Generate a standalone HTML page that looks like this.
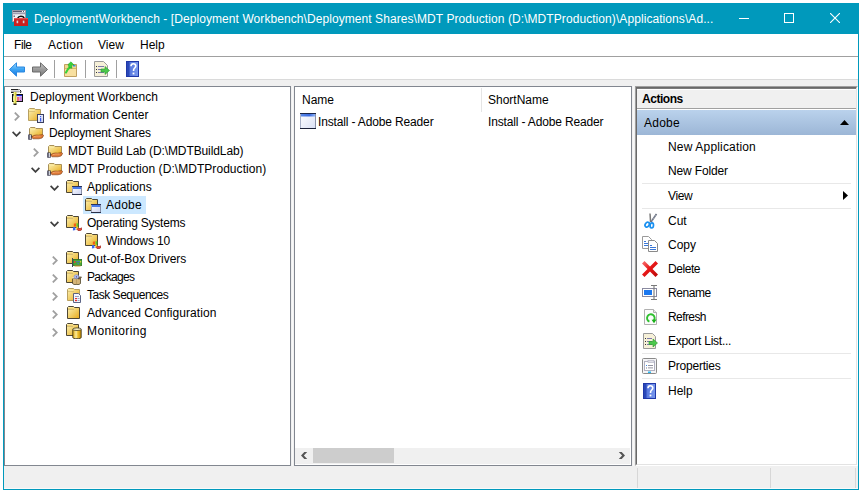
<!DOCTYPE html>
<html><head><meta charset="utf-8">
<style>
*{box-sizing:border-box}
html,body{margin:0;padding:0;background:#fff;width:864px;height:495px;overflow:hidden;position:relative;font-family:"Liberation Sans",sans-serif;font-size:12px;color:#000}
.a{position:absolute}
.t{position:absolute;white-space:nowrap;line-height:18px;height:18px}
svg.i{position:absolute;overflow:visible;width:16px;height:16px}
</style></head><body>
<svg width="0" height="0" style="position:absolute">
<defs>
<linearGradient id="gFold" x1="0" y1="0" x2="0" y2="1"><stop offset="0" stop-color="#fbeaa5"/><stop offset="1" stop-color="#e6c25c"/></linearGradient>
<linearGradient id="gFoldB" x1="0" y1="0" x2="1" y2="1"><stop offset="0" stop-color="#f4dc8c"/><stop offset="1" stop-color="#dcb452"/></linearGradient>
<linearGradient id="gWin" x1="0" y1="0" x2="1" y2="1"><stop offset="0" stop-color="#fff"/><stop offset="1" stop-color="#d8dcf0"/></linearGradient>
<linearGradient id="gBlue" x1="0" y1="0" x2="0" y2="1"><stop offset="0" stop-color="#6aa8ff"/><stop offset="1" stop-color="#1a62d8"/></linearGradient>
<linearGradient id="gF" x1="0" y1="0" x2="1" y2="1"><stop offset="0" stop-color="#fcf2b8"/><stop offset=".5" stop-color="#f2d06a"/><stop offset="1" stop-color="#e8a818"/></linearGradient>
<linearGradient id="gDoc" x1="0" y1="0" x2="1" y2="1"><stop offset="0" stop-color="#ffffff"/><stop offset="1" stop-color="#c8d0f0"/></linearGradient>
<linearGradient id="gCyl" x1="0" y1="0" x2="1" y2="0"><stop offset="0" stop-color="#e0a810"/><stop offset=".4" stop-color="#fcec9c"/><stop offset=".6" stop-color="#f0c030"/><stop offset="1" stop-color="#c08800"/></linearGradient>
<g id="fb">
<path d="M1.5 13.5V2.5l1-1h5l1 1h5v11z" fill="url(#gF)" stroke="#4e4634"/>
<path d="M2 3.5h5.5" stroke="#f0d070" fill="none"/>
<path d="M2 4.5h6" stroke="#c8b070" fill="none" opacity=".7"/>
</g>
<g id="fbl">
<path d="M1.5 13.5V2.5l1-1h5l1 1h5v11z" fill="url(#gF)" stroke="#b8a060"/>
<path d="M2 3.5h5.5" stroke="#f8e8a0" fill="none"/>
<path d="M2 4.5h6" stroke="#d0b870" fill="none" opacity=".7"/>
</g>
<symbol id="folder" viewBox="0 0 16 16"><use href="#fb"/></symbol>
<symbol id="fshare" viewBox="0 0 16 16">
<path d="M1.5 11.5V3.5l1-1h4.5l1 1h6.5v8z" fill="url(#gF)" stroke="#a89058"/>
<path d="M2 4.5h5" stroke="#f8e8a0" fill="none"/>
<g transform="translate(0 -1)">
<path d="M3.5 13c2-1.8 4.5-2.2 7-1.8l4-.6 1.2.8-1.6 2.6-3.2.8H5z" fill="#e07a38" stroke="#7a3a10" stroke-width=".6"/>
<path d="M5.5 12.8c2-.8 4-1 7-.7" stroke="#f8b880" stroke-width=".7" fill="none"/>
<rect x="0.3" y="10.5" width="3.4" height="5.2" fill="#2a2a40"/>
<rect x="1.6" y="11" width="1.3" height="4.2" fill="#e0e4ec"/>
</g>
</symbol>
<symbol id="info" viewBox="0 0 16 16">
<use href="#fbl" transform="translate(-1 0)"/>
<rect x="9.5" y="7.5" width="6" height="8" fill="url(#gDoc)" stroke="#3a4060"/>
<rect x="12" y="9" width="1.2" height="1.2" fill="#3a5ae8"/>
<rect x="12" y="11" width="1.2" height="3.5" fill="#3a5ae8"/>
</symbol>
<symbol id="fapp" viewBox="0 0 16 16">
<use href="#fb" transform="translate(-1 0)"/>
<rect x="6" y="7" width="10" height="9" fill="url(#gDoc)"/>
<rect x="6" y="7" width="1" height="9" fill="#a0a8c0"/><rect x="15" y="7" width="1" height="9" fill="#8890a8"/>
<rect x="6" y="7" width="10" height="1" fill="#2a3460"/>
<rect x="7" y="8" width="8" height="2" fill="#4a7ae8"/>
<rect x="6" y="15" width="10" height="1" fill="#2a3048"/>
</symbol>
<symbol id="fos" viewBox="0 0 16 16">
<use href="#fb" transform="translate(-1 -1)"/>
<path d="M7.8 8.8l2-.6.3 3-2.2.5z" fill="#f06018"/>
<path d="M10.5 8.3l2 .2-.3 3.2-1.6-.3z" fill="#58c828"/>
<path d="M7 12.3l2.3-.4.2 3-2.6.5z" fill="#3a6af0"/>
<path d="M10.2 11.8l1.8.2-.2 2.8-1.4-.2z" fill="#f8c818"/>
<path d="M11 14.5l1-1.2 2.2.3 1.3-.8.5 1.6-1.8 1.3-2.2-.2z" fill="#e84838" stroke="#8a1a10" stroke-width=".6"/>
</symbol>
<symbol id="fdrv" viewBox="0 0 16 16">
<use href="#fb" transform="translate(-1 -1)"/>
<rect x="7" y="8.5" width="9" height="6" fill="#48a838" stroke="#2a6a20" stroke-width=".8"/>
<rect x="8" y="10" width="1.5" height="2" fill="#e04040"/>
<rect x="10.5" y="10" width="1.2" height="1.2" fill="#4a6ae0"/><rect x="12.5" y="10" width="1.2" height="1.2" fill="#4a6ae0"/><rect x="11.5" y="12" width="1.2" height="1.2" fill="#4a6ae0"/>
<rect x="14" y="10" width="1.2" height="1.5" fill="#d8d040"/>
<rect x="8.5" y="14.5" width="6" height="1" fill="#c89830"/>
<rect x="6" y="7" width="1" height="9" fill="#404858"/>
</symbol>
<symbol id="fpkg" viewBox="0 0 16 16">
<use href="#fb" transform="translate(-1 0)"/>
<path d="M6.5 9.5h8v5l-1.5 1h-5l-1.5-1z" fill="#d4b478" stroke="#3a3018" stroke-width=".7"/>
<path d="M10.5 10v5.5" stroke="#b09050" stroke-width=".6"/>
<path d="M5.5 8.5l2.5-1 1 2h-3z" fill="#f0dca8"/>
<path d="M15.5 8l-1.5 1.8h-2l1-1.8z" fill="#b89860" stroke="#2a2010" stroke-width=".6"/>
<ellipse cx="10.4" cy="7.7" rx="2.4" ry="2" fill="#b0bef4" stroke="#7a88c8" stroke-width=".5"/>
<ellipse cx="10.4" cy="7.8" rx=".6" ry=".9" fill="#6a5a80"/>
</symbol>
<symbol id="fts" viewBox="0 0 16 16">
<use href="#fbl" transform="translate(0 0)"/>
<path d="M7.5 6.5h5l2 2v7h-7z" fill="#f4f6ff" stroke="#4a5478" stroke-width=".9"/>
<rect x="9" y="9" width="4" height=".8" fill="#8090b0"/>
<rect x="9" y="11" width="2" height="1.2" fill="#e83030"/><rect x="11.5" y="11" width="2" height=".8" fill="#8090b0"/>
<rect x="9" y="13" width="2" height="1.2" fill="#e83030"/><rect x="11.5" y="13" width="2" height=".8" fill="#8090b0"/>
</symbol>
<symbol id="fmon" viewBox="0 0 16 16">
<use href="#fb" transform="translate(-1 -1)"/>
<path d="M6.8 6.2v8.3c0 .8 1.9 1.2 4.2 1.2s4.2-.4 4.2-1.2V6.2" fill="url(#gCyl)" stroke="#2a2410" stroke-width=".8"/>
<ellipse cx="11" cy="6.2" rx="4.2" ry="1.3" fill="#fcf4c8" stroke="#2a2410" stroke-width=".7"/>
</symbol>
<symbol id="wb" viewBox="0 0 16 16">
<rect x="2.5" y="5.5" width="10" height="7" fill="#fff" stroke="#111"/>
<rect x="3" y="6" width="9" height="1.2" fill="#1a2ae0"/>
<rect x="7" y="8" width="2.5" height="4" fill="#f06a80"/>
<rect x="9.5" y="7.5" width="2.5" height="4.5" fill="#c888e0"/>
<path d="M1 1.5h7.5l1.5 .5-.5 1.5H1z" fill="#b0b0b0"/>
<path d="M1 .5h7.5M1 3.5h5" stroke="#222"/>
<path d="M9.5 .5l1.5 1.5-.5 2" stroke="#222" fill="none"/>
<rect x="3.5" y="3" width="3" height="12" fill="#d8d040"/>
<rect x="4" y="3" width="1" height="12" fill="#f0f080"/>
<rect x="3.5" y="14.5" width="3" height="1.5" fill="#222"/>
</symbol>
</defs>
</svg>

<!-- window frame -->
<div class="a" style="left:3px;top:3px;width:856px;height:487px;background:#f0f0f0;border:1px solid #0099bc;border-top:none"></div>
<!-- title bar -->
<div class="a" style="left:3px;top:3px;width:856px;height:31px;background:#0099bc"></div>
<svg class="i" style="left:12px;top:10px" viewBox="0 0 16 16">
<rect x=".5" y=".5" width="13" height="11" fill="#f0f0f4" stroke="#9a9aa8"/>
<rect x="1" y="1" width="12" height="1.3" fill="#5a5a70"/>
<rect x="10" y="1" width="1" height="1" fill="#fff"/><rect x="12" y="1" width="1" height="1" fill="#fff"/>
<rect x="1" y="3.2" width="12" height="1" fill="#8a8aa0"/>
<rect x="1.5" y="5.5" width="1.5" height="1.5" fill="#707080"/>
<path d="M5.8 8.2c.8-2.6 5.4-2.6 6.4 0" fill="none" stroke="#111" stroke-width="1.6"/>
<rect x="2" y="8" width="14" height="8" fill="#cc2020"/>
<rect x="2" y="8" width="14" height="1.2" fill="#e85050"/>
<rect x="4.6" y="10.6" width="1.6" height="2.6" fill="#c8d4e0"/>
<rect x="10.8" y="10.6" width="1.6" height="2.6" fill="#c8d4e0"/>
</svg>
<div class="t" style="left:34px;top:10px;color:#fff;letter-spacing:.074px">DeploymentWorkbench - [Deployment Workbench\Deployment Shares\MDT Production (D:\MDTProduction)\Applications\Ad...</div>
<div class="a" style="left:739px;top:18px;width:10px;height:1px;background:#fff"></div>
<div class="a" style="left:784px;top:13px;width:10px;height:10px;border:1px solid #fff"></div>
<svg class="a" style="left:830px;top:13px;width:10px;height:10px" viewBox="0 0 10 10"><path d="M0 0L10 10M10 0L0 10" stroke="#fff" stroke-width="1.1"/></svg>

<!-- menu bar -->
<div class="a" style="left:4px;top:34px;width:854px;height:22px;background:#fff"></div>
<div class="a" style="left:4px;top:56px;width:854px;height:1px;background:#a0a0a0"></div>
<div class="t" style="left:14px;top:36px;letter-spacing:-0.433px">File</div>
<div class="t" style="left:48px;top:36px;letter-spacing:0.32px">Action</div>
<div class="t" style="left:98px;top:36px">View</div>
<div class="t" style="left:140px;top:36px">Help</div>
<!-- toolbar -->
<div class="a" style="left:4px;top:57px;width:854px;height:22px;background:#fff"></div>
<div class="a" style="left:4px;top:79px;width:854px;height:1px;background:#dadada"></div>
<svg class="i" style="left:9px;top:62px" viewBox="0 0 16 16">
<defs><linearGradient id="gBk" x1="0" y1="0" x2="0" y2="1"><stop offset="0" stop-color="#9ad8ff"/><stop offset=".5" stop-color="#3aa4f4"/><stop offset="1" stop-color="#1a74e0"/></linearGradient>
<linearGradient id="gFw" x1="0" y1="0" x2="0" y2="1"><stop offset="0" stop-color="#c8c8c8"/><stop offset=".5" stop-color="#9a9a9a"/><stop offset="1" stop-color="#7a7a7a"/></linearGradient></defs>
<path d="M.5 7.5L7.5 .8v4.2h8v5h-8v4.2z" fill="url(#gBk)" stroke="#2a88e0"/>
</svg>
<svg class="i" style="left:32px;top:62px" viewBox="0 0 16 16"><path d="M15.5 7.5L8.5 .8v4.2H.5v5h8v4.2z" fill="url(#gFw)" stroke="#6a6a6a"/></svg>
<div class="a" style="left:54px;top:60px;width:1px;height:18px;background:#a0a0a0"></div>
<svg class="i" style="left:63px;top:61px" viewBox="0 0 16 16">
<path d="M1.5 3.5h12v12h-12z" fill="#f0d890" stroke="#c0a060"/>
<path d="M2 7.5h11" stroke="#d8b868"/>
<rect x="2" y="8" width="11" height="7" fill="#f8e0a0"/>
<rect x="10" y="4" width="2.5" height="1.5" fill="#3a90e0"/>
<path d="M3 11.5c1-3 2.5-4.5 4.5-5.5" stroke="#3ad23a" stroke-width="2.2" fill="none" stroke-linecap="round"/>
<path d="M5 3.5L8 .8l3 3.2-2.5.3.5 3-3-1z" fill="#3ad23a" stroke="#22a022" stroke-width=".5"/>
</svg>
<div class="a" style="left:85px;top:60px;width:1px;height:18px;background:#a0a0a0"></div>
<svg class="i" style="left:94px;top:61px" viewBox="0 0 16 16">
<path d="M0.5 .5h9l4 4v11H.5z" fill="#f6f0d8" stroke="#9a9a9a"/>
<rect x="2" y="5" width="1" height="1" fill="#333"/><rect x="2" y="8" width="1" height="1" fill="#333"/><rect x="2" y="11" width="1" height="1" fill="#333"/>
<rect x="4" y="5" width="6" height="1" fill="#7a7aaa"/><rect x="4" y="8" width="6" height="1" fill="#7a7aaa"/><rect x="4" y="11" width="6" height="1" fill="#7a7aaa"/>
<path d="M7 8h4V5.5L15.5 9.5 11 13.5V11H7z" fill="#4cc84c" stroke="#2a9a2a" stroke-width=".6"/>
</svg>
<div class="a" style="left:116px;top:60px;width:1px;height:18px;background:#a0a0a0"></div>
<svg class="i" style="left:126px;top:61px" viewBox="0 0 16 16">
<defs><linearGradient id="gHp" x1="0" y1="0" x2="1" y2="0"><stop offset="0" stop-color="#4a6ad8"/><stop offset="1" stop-color="#7a9aee"/></linearGradient></defs>
<rect x=".5" y=".5" width="12" height="15" fill="url(#gHp)" stroke="#2038a8"/>
<rect x="1" y="1" width="2.5" height="14" fill="#2a48b8"/>
<path d="M5 5.2c0-1.6 1.2-2.4 2.4-2.4s2.4.8 2.4 2.3c0 1.8-2.2 2-2.2 4v.8" fill="none" stroke="#fff" stroke-width="1.6"/>
<rect x="6.6" y="11.6" width="1.8" height="1.8" fill="#fff"/>
</svg>
<!-- tree pane -->
<div class="a" style="left:4px;top:86px;width:287px;height:380px;background:#fff;border:1px solid #828790"></div>
<!-- tree rows -->
<svg class="i" style="left:10px;top:89px" viewBox="0 0 16 16"><use href="#wb"/></svg>
<div class="t" style="left:30px;top:88px">Deployment Workbench</div>
<svg class="a" style="left:14px;top:112px;width:6px;height:9px" viewBox="0 0 6 9"><path d="M.8 .6L4.8 4.5.8 8.4" fill="none" stroke="#a0a0a0" stroke-width="1.8"/></svg>
<svg class="i" style="left:28px;top:107px" viewBox="0 0 16 16"><use href="#info"/></svg>
<div class="t" style="left:49px;top:106px">Information Center</div>
<svg class="a" style="left:12px;top:131px;width:9px;height:6px" viewBox="0 0 9 6"><path d="M.6 .8L4.5 4.8 8.4 .8" fill="none" stroke="#404040" stroke-width="1.8"/></svg>
<svg class="i" style="left:28px;top:125px" viewBox="0 0 16 16"><use href="#fshare"/></svg>
<div class="t" style="left:49px;top:124px;letter-spacing:-0.213px">Deployment Shares</div>
<svg class="a" style="left:33px;top:148px;width:6px;height:9px" viewBox="0 0 6 9"><path d="M.8 .6L4.8 4.5.8 8.4" fill="none" stroke="#a0a0a0" stroke-width="1.8"/></svg>
<svg class="i" style="left:47px;top:143px" viewBox="0 0 16 16"><use href="#fshare"/></svg>
<div class="t" style="left:68px;top:142px;letter-spacing:-0.103px">MDT Build Lab (D:\MDTBuildLab)</div>
<svg class="a" style="left:31px;top:167px;width:9px;height:6px" viewBox="0 0 9 6"><path d="M.6 .8L4.5 4.8 8.4 .8" fill="none" stroke="#404040" stroke-width="1.8"/></svg>
<svg class="i" style="left:47px;top:161px" viewBox="0 0 16 16"><use href="#fshare"/></svg>
<div class="t" style="left:68px;top:160px;letter-spacing:0.053px">MDT Production (D:\MDTProduction)</div>
<svg class="a" style="left:50px;top:185px;width:9px;height:6px" viewBox="0 0 9 6"><path d="M.6 .8L4.5 4.8 8.4 .8" fill="none" stroke="#404040" stroke-width="1.8"/></svg>
<svg class="i" style="left:66px;top:179px" viewBox="0 0 16 16"><use href="#fapp"/></svg>
<div class="t" style="left:87px;top:178px">Applications</div>
<div class="a" style="left:83px;top:196px;width:63px;height:18px;background:#cce8ff"></div>
<svg class="i" style="left:85px;top:197px" viewBox="0 0 16 16"><use href="#fapp"/></svg>
<div class="t" style="left:106px;top:196px;letter-spacing:0.225px">Adobe</div>
<svg class="a" style="left:50px;top:221px;width:9px;height:6px" viewBox="0 0 9 6"><path d="M.6 .8L4.5 4.8 8.4 .8" fill="none" stroke="#404040" stroke-width="1.8"/></svg>
<svg class="i" style="left:66px;top:215px" viewBox="0 0 16 16"><use href="#fos"/></svg>
<div class="t" style="left:87px;top:214px;letter-spacing:-0.225px">Operating Systems</div>
<svg class="i" style="left:85px;top:233px" viewBox="0 0 16 16"><use href="#fos"/></svg>
<div class="t" style="left:106px;top:232px;letter-spacing:-0.133px">Windows 10</div>
<svg class="a" style="left:52px;top:256px;width:6px;height:9px" viewBox="0 0 6 9"><path d="M.8 .6L4.8 4.5.8 8.4" fill="none" stroke="#a0a0a0" stroke-width="1.8"/></svg>
<svg class="i" style="left:66px;top:251px" viewBox="0 0 16 16"><use href="#fdrv"/></svg>
<div class="t" style="left:87px;top:250px">Out-of-Box Drivers</div>
<svg class="a" style="left:52px;top:274px;width:6px;height:9px" viewBox="0 0 6 9"><path d="M.8 .6L4.8 4.5.8 8.4" fill="none" stroke="#a0a0a0" stroke-width="1.8"/></svg>
<svg class="i" style="left:66px;top:269px" viewBox="0 0 16 16"><use href="#fpkg"/></svg>
<div class="t" style="left:87px;top:268px;letter-spacing:-0.657px">Packages</div>
<svg class="a" style="left:52px;top:292px;width:6px;height:9px" viewBox="0 0 6 9"><path d="M.8 .6L4.8 4.5.8 8.4" fill="none" stroke="#a0a0a0" stroke-width="1.8"/></svg>
<svg class="i" style="left:66px;top:287px" viewBox="0 0 16 16"><use href="#fts"/></svg>
<div class="t" style="left:87px;top:286px;letter-spacing:-0.481px">Task Sequences</div>
<svg class="a" style="left:52px;top:310px;width:6px;height:9px" viewBox="0 0 6 9"><path d="M.8 .6L4.8 4.5.8 8.4" fill="none" stroke="#a0a0a0" stroke-width="1.8"/></svg>
<svg class="i" style="left:66px;top:305px" viewBox="0 0 16 16"><use href="#folder"/></svg>
<div class="t" style="left:87px;top:304px;letter-spacing:0.062px">Advanced Configuration</div>
<svg class="a" style="left:52px;top:328px;width:6px;height:9px" viewBox="0 0 6 9"><path d="M.8 .6L4.8 4.5.8 8.4" fill="none" stroke="#a0a0a0" stroke-width="1.8"/></svg>
<svg class="i" style="left:66px;top:323px" viewBox="0 0 16 16"><use href="#fmon"/></svg>
<div class="t" style="left:87px;top:322px;letter-spacing:0.389px">Monitoring</div>
<!-- list pane -->
<div class="a" style="left:294px;top:86px;width:338px;height:380px;background:#fff;border:1px solid #828790"></div>
<!-- list content -->
<div class="a" style="left:481px;top:88px;width:1px;height:24px;background:#e5e5e5"></div>
<div class="t" style="left:302px;top:91px">Name</div>
<div class="t" style="left:488px;top:91px">ShortName</div>
<svg class="i" style="left:300px;top:113px" viewBox="0 0 16 16">
<defs><linearGradient id="gW2" x1="0" y1="0" x2="1" y2="1"><stop offset="0" stop-color="#ffffff"/><stop offset="1" stop-color="#d8def4"/></linearGradient>
<linearGradient id="gTb" x1="0" y1="0" x2="1" y2="0"><stop offset="0" stop-color="#5a88e8"/><stop offset=".6" stop-color="#3a6ae0"/><stop offset="1" stop-color="#8ab0f8"/></linearGradient></defs>
<rect x="0" y="0" width="16" height="16" fill="url(#gW2)"/>
<rect x="0" y="0" width="1" height="16" fill="#a8b0c8"/><rect x="15" y="0" width="1" height="16" fill="#8890a8"/>
<rect x="0" y="0" width="16" height="1" fill="#1a2448"/>
<rect x="1" y="1" width="14" height="2.5" fill="url(#gTb)"/>
<rect x="0" y="15" width="16" height="1" fill="#1a2038"/>
</svg>
<div class="t" style="left:318px;top:113px;letter-spacing:-0.148px">Install - Adobe Reader</div>
<div class="t" style="left:488px;top:113px;letter-spacing:-0.152px">Install - Adobe Reader</div>
<!-- h scrollbar -->
<div class="a" style="left:295px;top:448px;width:335px;height:16px;background:#f0f0f0"></div>
<div class="a" style="left:313px;top:448px;width:81px;height:15px;background:#cdcdcd"></div>
<svg class="a" style="left:0;top:0;width:864px;height:495px;pointer-events:none" viewBox="0 0 864 495"><path d="M301 455.4L304.3 452H307.2L303.9 455.4 307.2 458.9H304.3z" fill="#555"/><path d="M625 455.4L621.7 452H618.8L622.1 455.4 618.8 458.9H621.7z" fill="#555"/></svg>

<!-- actions pane -->
<div class="a" style="left:635px;top:86px;width:223px;height:380px;background:#fff;border-left:1px solid #a0a0a0;border-top:1px solid #a0a0a0;border-right:1px solid #fff;border-bottom:1px solid #fff"><div style="width:100%;height:100%;border-left:1px solid #696969;border-top:1px solid #696969;border-right:1px solid #e3e3e3;border-bottom:1px solid #e3e3e3"></div></div>

<!-- actions content -->
<div class="a" style="left:637px;top:88px;width:219px;height:1px;background:#7a7a7a"></div>
<div class="a" style="left:637px;top:89px;width:219px;height:1px;background:#fff"></div>
<div class="a" style="left:637px;top:90px;width:219px;height:18px;background:#f0f0f0"></div>
<div class="a" style="left:637px;top:108px;width:219px;height:1px;background:#a0a0a0"></div>
<div class="t" style="left:642px;top:90px;font-weight:bold;letter-spacing:-0.467px">Actions</div>
<div class="a" style="left:637px;top:109px;width:219px;height:1px;background:#fff"></div>
<div class="a" style="left:637px;top:110px;width:219px;height:25px;background:linear-gradient(#bad2ec,#9cb6d6)"></div>
<div class="t" style="left:644px;top:114px;letter-spacing:0.25px">Adobe</div>
<svg class="a" style="left:840px;top:120px;width:9px;height:5px" viewBox="0 0 9 5"><path d="M0 5L4.5 0 9 5z" fill="#000"/></svg>
<div class="t" style="left:668px;top:138px;letter-spacing:0.171px">New Application</div>
<div class="t" style="left:668px;top:162px;letter-spacing:-0.144px">New Folder</div>
<div class="a" style="left:642px;top:183px;width:209px;height:1px;background:#e8e8e8"></div>
<div class="t" style="left:668px;top:187px;letter-spacing:-0.4px">View</div>
<svg class="a" style="left:843px;top:191px;width:5px;height:9px" viewBox="0 0 5 9"><path d="M0 0L5 4.5 0 9z" fill="#000"/></svg>
<div class="a" style="left:642px;top:208px;width:209px;height:1px;background:#e8e8e8"></div>
<div class="t" style="left:668px;top:212px">Cut</div>
<div class="t" style="left:668px;top:236px">Copy</div>
<div class="t" style="left:668px;top:260px;letter-spacing:-0.44px">Delete</div>
<div class="t" style="left:668px;top:284px;letter-spacing:-0.42px">Rename</div>
<div class="t" style="left:668px;top:308px;letter-spacing:-0.583px">Refresh</div>
<div class="t" style="left:668px;top:332px;letter-spacing:-0.254px">Export List...</div>
<div class="a" style="left:642px;top:353px;width:209px;height:1px;background:#e8e8e8"></div>
<div class="t" style="left:668px;top:357px;letter-spacing:-0.222px">Properties</div>
<div class="a" style="left:642px;top:378px;width:209px;height:1px;background:#e8e8e8"></div>
<div class="t" style="left:668px;top:382px">Help</div>
<!-- action icons -->
<svg class="i" style="left:642px;top:213px" viewBox="0 0 16 16">
<path d="M8 .5L8.6 9" stroke="#7a7a7a" stroke-width="1.5" fill="none"/>
<path d="M14.5 1L9 9" stroke="#6a7080" stroke-width="1.6" fill="none"/>
<path d="M14 2L9.5 8.5" stroke="#e0e8f0" stroke-width=".5" stroke-dasharray="1 1" fill="none"/>
<ellipse cx="5.2" cy="11.6" rx="1.9" ry="2.6" transform="rotate(35 5.2 11.6)" fill="#fff" stroke="#1a90f0" stroke-width="1.7"/>
<ellipse cx="9.8" cy="12.4" rx="1.7" ry="2.6" transform="rotate(5 9.8 12.4)" fill="#fff" stroke="#1a90f0" stroke-width="1.7"/>
</svg>
<svg class="i" style="left:642px;top:236px" viewBox="0 0 16 16">
<path d="M.5 .5h6l3 3v9H.5z" fill="#fff" stroke="#9a9a9a"/>
<path d="M2 5.5h2M2 7.5h5M2 9.5h5" stroke="#3a78d8" stroke-width="1"/>
<path d="M6.5 4.5h6l3 3v8h-9z" fill="#fff" stroke="#8a8a8a"/>
<path d="M8 9.5h2M8 11.5h6M8 13.5h6" stroke="#3a78d8" stroke-width="1"/>
</svg>
<svg class="i" style="left:642px;top:261px" viewBox="0 0 16 16">
<defs><linearGradient id="gX" x1="0" y1="0" x2="1" y2="1"><stop offset="0" stop-color="#f87878"/><stop offset=".45" stop-color="#e81818"/><stop offset="1" stop-color="#b80808"/></linearGradient></defs>
<path d="M0 2.5L2.5 0 8 5.5 13.5 0 16 2.5 10.5 8 16 13.5 13.5 16 8 10.5 2.5 16 0 13.5 5.5 8z" fill="url(#gX)"/>
</svg>
<svg class="i" style="left:642px;top:284px" viewBox="0 0 16 16">
<rect x=".5" y="4.5" width="14" height="8" fill="#fff" stroke="#8a8aa0"/>
<rect x="2" y="6" width="8" height="5" fill="#1a78f0"/>
<path d="M9 1.5h6M9 15.5h6M12 1.5v14" stroke="#7a7a7a" stroke-width="1.1"/>
</svg>
<svg class="i" style="left:642px;top:309px" viewBox="0 0 16 16">
<path d="M2.5 .5h9l3 3v12h-12z" fill="#fcfcfc" stroke="#b0b0b0"/>
<path d="M11.5 .5v3h3" fill="#e8e8e8" stroke="#b0b0b0"/>
<g transform="translate(0 .8)"><path d="M7.4 11.8A3.8 3.8 0 1 1 11.6 10.9" fill="none" stroke="#30c030" stroke-width="1.9"/>
<path d="M9.6 10l5-.2-2.6 3.6z" fill="#18b018"/></g>
</svg>
<svg class="i" style="left:642px;top:333px" viewBox="0 0 16 16">
<path d="M1.5 .5h9l3 3v12h-12z" fill="#f6f0d8" stroke="#9a9a9a"/>
<rect x="3" y="5" width="1" height="1" fill="#333"/><rect x="3" y="8" width="1" height="1" fill="#333"/><rect x="3" y="11" width="1" height="1" fill="#333"/>
<rect x="5" y="5" width="5" height="1" fill="#7a7aaa"/><rect x="5" y="8" width="5" height="1" fill="#7a7aaa"/><rect x="5" y="11" width="5" height="1" fill="#7a7aaa"/>
<path d="M7 8.5h4V6l4.5 4-4.5 4v-2.5H7z" fill="#4cc84c" stroke="#2a9a2a" stroke-width=".6"/>
</svg>
<svg class="i" style="left:642px;top:358px" viewBox="0 0 16 16">
<rect x=".5" y=".5" width="14" height="15" rx="1" fill="#f4f4f6" stroke="#8a8a8a"/>
<rect x="2.5" y="3.5" width="10" height="9" fill="#fff" stroke="#b0b0c0"/>
<rect x="6" y="2.5" width="6" height="2" fill="#e0e0e8" stroke="#b0b0c0" stroke-width=".6"/>
<rect x="4" y="7" width="1" height="1" fill="#3a8ae8"/><rect x="6" y="7" width="5" height=".8" fill="#7a7a8a"/>
<rect x="4" y="9.5" width="1" height="1" fill="#7a7a8a"/><rect x="6" y="9.5" width="5" height=".8" fill="#7a7a8a"/>
<rect x="6" y="13.5" width="3" height="1.5" fill="#28b8f0"/>
</svg>
<svg class="i" style="left:643px;top:383px" viewBox="0 0 16 16">
<rect x=".5" y=".5" width="12" height="15" fill="url(#gHp)" stroke="#2038a8"/>
<rect x="1" y="1" width="2.5" height="14" fill="#2a48b8"/>
<path d="M5 5.2c0-1.6 1.2-2.4 2.4-2.4s2.4.8 2.4 2.3c0 1.8-2.2 2-2.2 4v.8" fill="none" stroke="#fff" stroke-width="1.6"/>
<rect x="6.6" y="11.6" width="1.8" height="1.8" fill="#fff"/>
</svg>
<!-- status bar -->
<div class="a" style="left:4px;top:488px;width:854px;height:1px;background:#fafafa"></div>
<div class="a" style="left:292px;top:86px;width:1px;height:380px;background:#f8f8f8"></div>
<div class="a" style="left:633px;top:86px;width:1px;height:380px;background:#f8f8f8"></div>
<div class="a" style="left:637px;top:468px;width:1px;height:20px;background:#d7d7d7"></div>
<div class="a" style="left:770px;top:468px;width:1px;height:20px;background:#d7d7d7"></div>
<div class="a" style="left:855px;top:468px;width:1px;height:20px;background:#d7d7d7"></div>
</body></html>
